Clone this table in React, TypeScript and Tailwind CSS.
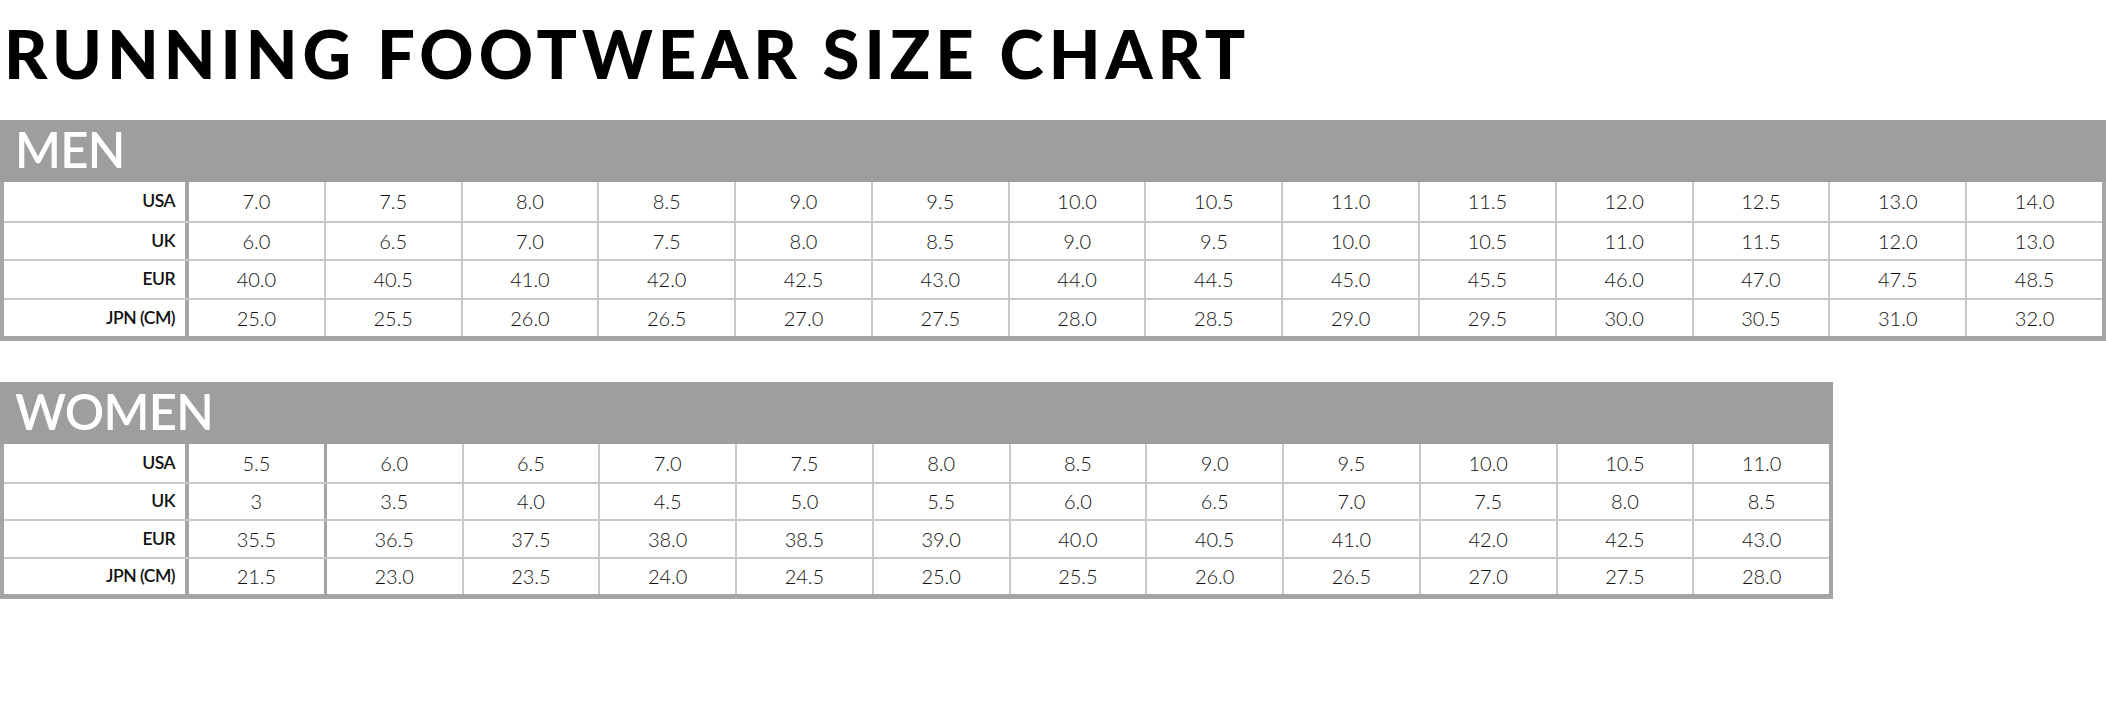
import React from "react";

type Row = { label: string; values: string[] };

const men: Row[] = [
  { label: "USA", values: ["7.0", "7.5", "8.0", "8.5", "9.0", "9.5", "10.0", "10.5", "11.0", "11.5", "12.0", "12.5", "13.0", "14.0"] },
  { label: "UK", values: ["6.0", "6.5", "7.0", "7.5", "8.0", "8.5", "9.0", "9.5", "10.0", "10.5", "11.0", "11.5", "12.0", "13.0"] },
  { label: "EUR", values: ["40.0", "40.5", "41.0", "42.0", "42.5", "43.0", "44.0", "44.5", "45.0", "45.5", "46.0", "47.0", "47.5", "48.5"] },
  { label: "JPN (CM)", values: ["25.0", "25.5", "26.0", "26.5", "27.0", "27.5", "28.0", "28.5", "29.0", "29.5", "30.0", "30.5", "31.0", "32.0"] },
];

const women: Row[] = [
  { label: "USA", values: ["5.5", "6.0", "6.5", "7.0", "7.5", "8.0", "8.5", "9.0", "9.5", "10.0", "10.5", "11.0"] },
  { label: "UK", values: ["3", "3.5", "4.0", "4.5", "5.0", "5.5", "6.0", "6.5", "7.0", "7.5", "8.0", "8.5"] },
  { label: "EUR", values: ["35.5", "36.5", "37.5", "38.0", "38.5", "39.0", "40.0", "40.5", "41.0", "42.0", "42.5", "43.0"] },
  { label: "JPN (CM)", values: ["21.5", "23.0", "23.5", "24.0", "24.5", "25.0", "25.5", "26.0", "26.5", "27.0", "27.5", "28.0"] },
];

function SizeTable({
  title,
  rows,
  women: isWomen,
}: {
  title: string;
  rows: Row[];
  women?: boolean;
}) {
  return (
    <div className={isWomen ? "w-[1833px]" : "w-[2106px]"}>
      <div className="h-[62px] bg-[#9e9e9e] pl-[15px] pt-[5px]">
        <span className="block text-[49px] leading-[49px] font-semibold text-white tracking-[-0.015em]">{title}</span>
      </div>
      <div className="border-x-4 border-b-[5px] border-[#a5a5a5] bg-white">
        {rows.map((row, ri) => (
          <div
            key={row.label}
            className={
              (isWomen ? "h-[37.5px] " : "h-[38.5px] ") +
              "flex " +
              (ri > 0 ? "border-t-2 border-[#c8c8c8]" : "")
            }
          >
            <div className="w-[185px] shrink-0 border-r-4 border-[#a5a5a5] flex items-center justify-end pr-[10px] text-[17.5px] font-semibold text-[#111] tracking-[-0.03em]">
              {row.label}
            </div>
            {row.values.map((v, ci) => (
              <div
                key={ci}
                className={
                  "flex-1 basis-0 flex items-center justify-center text-[20px] font-light text-[#111] " +
                  (ci === 0
                    ? ""
                    : isWomen && ci === 1
                    ? "border-l-[3px] border-[#a5a5a5]"
                    : "border-l-2 border-[#c8c8c8]")
                }
              >
                {v}
              </div>
            ))}
          </div>
        ))}
      </div>
    </div>
  );
}

export default function App() {
  return (
    <div
      className="w-[2106px] h-[703px] bg-white overflow-hidden"
      style={{ fontFamily: "Lato, 'Noto Sans', 'Liberation Sans', sans-serif" }}
    >
      <div className="h-[120px] pt-[20px] pl-[4px]">
        <h1 className="text-[67px] leading-[67px] font-black tracking-[0.074em] text-black whitespace-nowrap">
          RUNNING FOOTWEAR SIZE CHART
        </h1>
      </div>
      <SizeTable title="MEN" rows={men} />
      <div className="h-[41px]" />
      <SizeTable title="WOMEN" rows={women} women />
    </div>
  );
}
